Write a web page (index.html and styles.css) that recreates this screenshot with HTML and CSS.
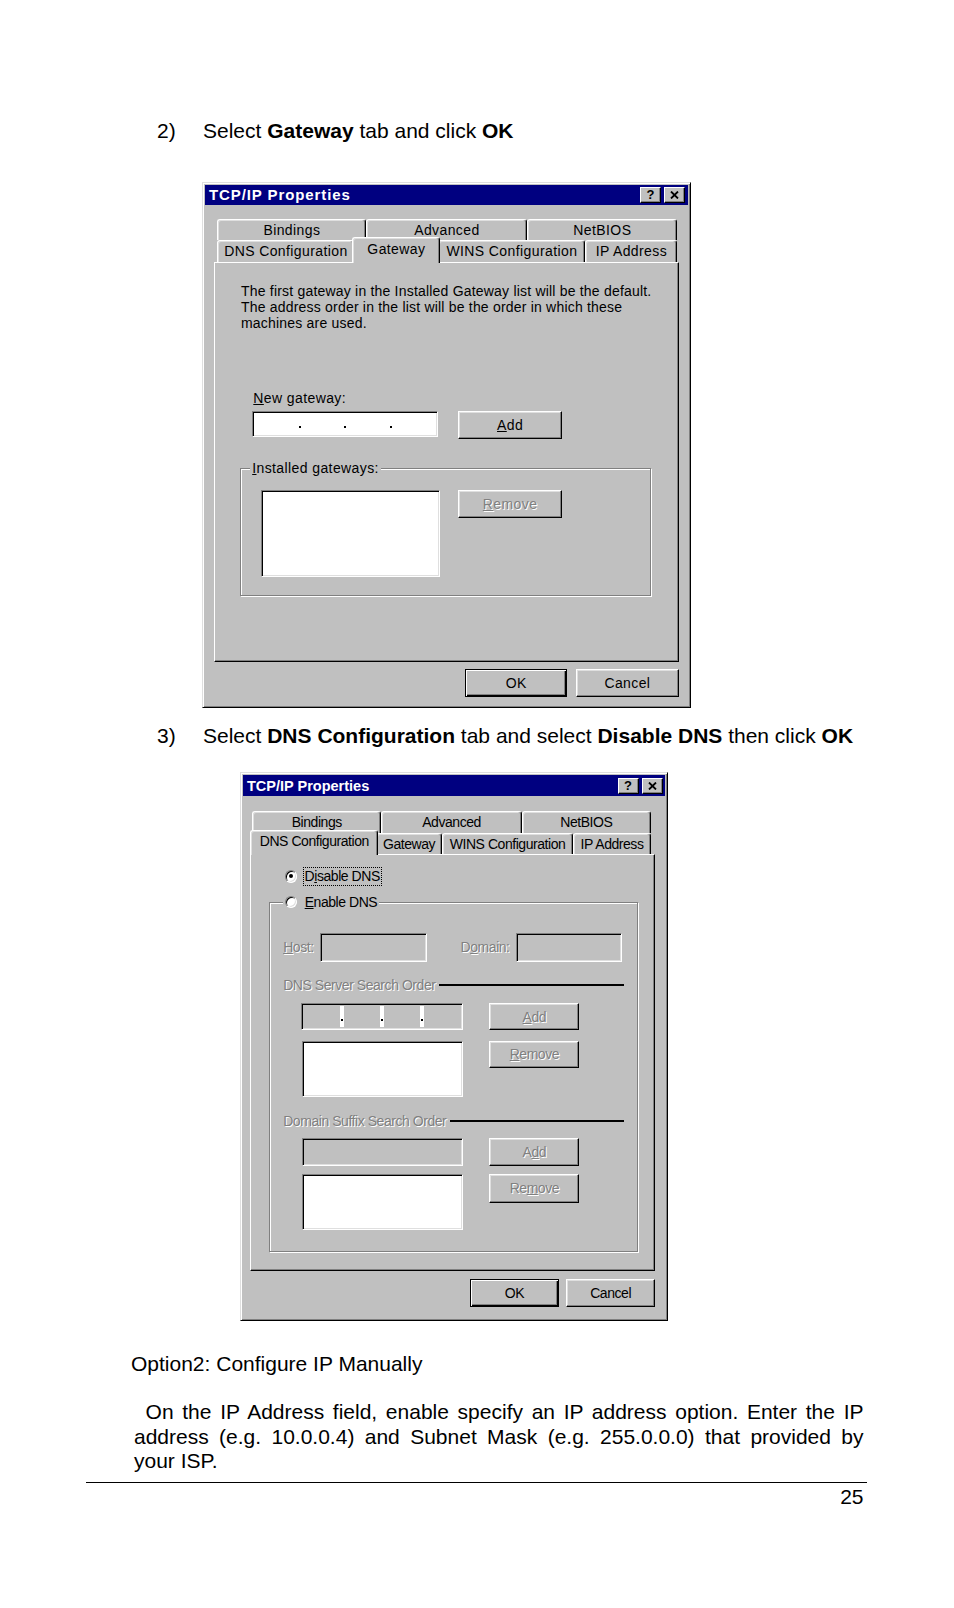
FILE: index.html
```html
<!DOCTYPE html>
<html>
<head>
<meta charset="utf-8">
<title>TCP/IP Properties</title>
<link rel="stylesheet" href="styles.css">
</head>
<body>
<div class="page">
  <p class="step"><span class="num">2)</span><span>Select <b>Gateway</b> tab and click <b>OK</b></span></p>

  <div class="dialog d1">
    <div class="titlebar">
      <span class="title">TCP/IP Properties</span>
      <span class="capbtns">
        <span class="capbtn">?</span>
        <span class="capbtn"><svg width="9" height="8" viewBox="0 0 9 8"><path d="M1 0.5 L8 7.5 M8 0.5 L1 7.5" stroke="#000" stroke-width="1.8" fill="none"/></svg></span>
      </span>
    </div>
    <div class="tabs">
      <div class="tabrow">
        <div class="tab w-a1">Bindings</div>
        <div class="tab w-a2">Advanced</div>
        <div class="tab w-a3">NetBIOS</div>
      </div>
      <div class="tabrow">
        <div class="tab w-b1">DNS Configuration</div>
        <div class="tab sel w-b2">Gateway</div>
        <div class="tab w-b3">WINS Configuration</div>
        <div class="tab w-b4">IP Address</div>
      </div>
    </div>
    <div class="panel">
      <p class="desc">The first gateway in the Installed Gateway list will be the default.<br>The address order in the list will be the order in which these<br>machines are used.</p>
      <div class="newgw"><u>N</u>ew gateway:</div>
      <div class="gwrow">
        <div class="sunken white ip1">
          <span class="seg"></span><span class="dot"></span><span class="seg"></span><span class="dot"></span><span class="seg"></span><span class="dot"></span><span class="seg"></span>
        </div>
        <div class="btn add1"><u>A</u>dd</div>
      </div>
      <div class="group g1">
        <div class="glabel"><u>I</u>nstalled gateways:</div>
        <div class="sunken white lb1"></div>
        <div class="btn rem1 dis"><u>R</u>emove</div>
      </div>
    </div>
    <div class="btnrow">
      <div class="btn def ok">OK</div>
      <div class="btn cancel">Cancel</div>
    </div>
  </div>

  <p class="step step-3"><span class="num">3)</span><span>Select <b>DNS Configuration</b> tab and select <b>Disable DNS</b> then click <b>OK</b></span></p>

  <div class="dialog d2">
    <div class="titlebar">
      <span class="title">TCP/IP Properties</span>
      <span class="capbtns">
        <span class="capbtn">?</span>
        <span class="capbtn"><svg width="9" height="8" viewBox="0 0 9 8"><path d="M1 0.5 L8 7.5 M8 0.5 L1 7.5" stroke="#000" stroke-width="1.8" fill="none"/></svg></span>
      </span>
    </div>
    <div class="tabs">
      <div class="tabrow">
        <div class="tab w-c1">Bindings</div>
        <div class="tab w-c2">Advanced</div>
        <div class="tab w-c3">NetBIOS</div>
      </div>
      <div class="tabrow">
        <div class="tab sel w-e1">DNS Configuration</div>
        <div class="tab w-e2">Gateway</div>
        <div class="tab w-e3">WINS Configuration</div>
        <div class="tab w-e4">IP Address</div>
      </div>
    </div>
    <div class="panel">
      <div class="dnsrow">
        <span class="radio on"></span>
        <span class="focus">D<u>i</u>sable DNS</span>
      </div>
      <div class="group g2">
        <div class="glabel"><span class="radio"></span><span class="rtext"><u>E</u>nable DNS</span></div>
        <div class="hostrow">
          <span class="dis hostl"><u>H</u>ost:</span>
          <span class="sunken grayf f-host"></span>
          <span class="dis doml">D<u>o</u>main:</span>
          <span class="sunken grayf f-dom"></span>
        </div>
        <div class="sect sect1"><span class="dis">DNS Server Search Order</span><span class="line"></span></div>
        <div class="frow r1">
          <div class="sunken grayf ip2">
            <span class="seg"></span><span class="sep"><span class="dot"></span></span><span class="seg"></span><span class="sep"><span class="dot"></span></span><span class="seg"></span><span class="sep"><span class="dot"></span></span><span class="seg"></span>
          </div>
          <div class="btn dis b2"><u>A</u>dd</div>
        </div>
        <div class="frow r2">
          <div class="sunken white lb2"></div>
          <div class="btn dis b2"><u>R</u>emove</div>
        </div>
        <div class="sect sect2"><span class="dis">Domain Suffix Search Order</span><span class="line"></span></div>
        <div class="frow r3">
          <div class="sunken grayf suf"></div>
          <div class="btn dis b2">A<u>d</u>d</div>
        </div>
        <div class="frow r4">
          <div class="sunken white lb2"></div>
          <div class="btn dis b2 b2t">Re<u>m</u>ove</div>
        </div>
      </div>
    </div>
    <div class="btnrow">
      <div class="btn def">OK</div>
      <div class="btn">Cancel</div>
    </div>
  </div>

  <p class="opt">Option2: Configure IP Manually</p>

  <p class="para">
    <span class="jl indent">On the IP Address field, enable specify an IP address option. Enter the IP</span>
    <span class="jl">address (e.g. 10.0.0.4) and Subnet Mask (e.g. 255.0.0.0) that provided by</span>
    <span class="last">your ISP.</span>
  </p>

  <div class="footrule"></div>
  <div class="pnum">25</div>
</div>
</body>
</html>
```

FILE: styles.css
```css
html, body {
  margin: 0;
  padding: 0;
  background: #fff;
}
body {
  font-family: "Liberation Sans", Arial, sans-serif;
  color: #000;
}
.page {
  width: 954px;
  padding-top: 119px;
  padding-bottom: 60px;
}

/* document text */
.step {
  display: flex;
  margin: 0 0 0 157px;
  font-size: 21px;
  line-height: 24px;
}
.step .num {
  width: 46px;
  flex: none;
}
.step-3 {
  margin-top: 16.5px;
}
.opt {
  margin: 31px 0 0 131px;
  font-size: 21px;
  line-height: 24px;
}
.para {
  margin: 24px 0 0 134px;
  width: 729.5px;
  font-size: 21px;
  line-height: 24.6px;
}
.jl {
  display: block;
  text-align: justify;
  text-align-last: justify;
}
.indent {
  text-indent: 11.6px;
}
.last {
  display: block;
}
.footrule {
  margin: 8.5px 0 0 86px;
  width: 780.5px;
  height: 1px;
  background: #000;
}
.pnum {
  margin-top: 2px;
  width: 863.5px;
  text-align: right;
  font-size: 21px;
  line-height: 24px;
}

/* window */
.dialog {
  box-sizing: border-box;
  background: #c0c0c0;
  border: 1px solid;
  border-color: #dfdfdf #000 #000 #dfdfdf;
  box-shadow: inset 1px 1px #fff, inset -1px -1px #808080;
  padding: 2px;
  font-size: 14px;
}
.d1 {
  width: 489px;
  height: 526px;
  margin: 38.5px 0 0 202px;
  letter-spacing: 0.4px;
}
.d2 {
  width: 427.6px;
  height: 549px;
  margin: 24px 0 0 240px;
  letter-spacing: -0.45px;
}

.titlebar {
  display: flex;
  align-items: center;
  justify-content: space-between;
  background: #000080;
  color: #fff;
  font-weight: bold;
  padding-left: 4px;
  padding-right: 3px;
}
.d1 .titlebar {
  height: 20px;
  font-size: 15px;
  letter-spacing: 0.9px;
}
.d2 .titlebar {
  height: 21px;
  font-size: 14.5px;
  letter-spacing: 0;
  padding-right: 2px;
}
.capbtns {
  display: flex;
  gap: 3px;
}
.capbtn {
  box-sizing: border-box;
  width: 21px;
  height: 16px;
  background: #c0c0c0;
  border: 1px solid;
  border-color: #fff #000 #000 #fff;
  box-shadow: inset -1px -1px #808080;
  color: #000;
  display: flex;
  align-items: center;
  justify-content: center;
  font-size: 13px;
  font-weight: bold;
  letter-spacing: 0;
}
.capbtn svg {
  display: block;
}

/* tabs */
.d1 .tabs {
  margin: 14px 0 0 12.4px;
}
.d2 .tabs {
  margin: 15px 0 0 9.3px;
}
.tabrow {
  display: flex;
  height: 21.5px;
  align-items: flex-end;
}
.tab {
  box-sizing: border-box;
  height: 21.5px;
  flex: none;
  display: flex;
  align-items: center;
  justify-content: center;
  background: #c0c0c0;
  border-top: 1px solid #fff;
  border-left: 1px solid #fff;
  border-right: 1px solid #000;
  border-radius: 3px 3px 0 0;
  box-shadow: inset -1px 0 #808080, inset 1px 1px #dfdfdf;
  white-space: nowrap;
}
.tab.sel {
  position: relative;
  z-index: 2;
  height: 25.5px;
  margin: 0 -2px -1px;
  padding-bottom: 3px;
}
.w-a1 { width: 149px; }
.w-a2 { width: 161px; }
.w-a3 { width: 150px; }
.w-b1 { width: 137px; }
.w-b2 { width: 88px; }
.w-b3 { width: 147px; }
.w-b4 { width: 92px; }
.w-c1 { width: 129px; }
.w-c2 { width: 140.5px; }
.w-c3 { width: 129px; }
.w-e1 { width: 128px; }
.w-e2 { width: 65.6px; }
.w-e3 { width: 131.3px; }
.w-e4 { width: 77.6px; }

.panel {
  box-sizing: border-box;
  border: 1px solid;
  border-color: #fff #000 #000 #fff;
  box-shadow: inset -1px -1px #808080;
  position: relative;
  z-index: 1;
}
.d1 .panel {
  width: 464.6px;
  height: 400px;
  margin-left: 9.3px;
}
.d2 .panel {
  width: 405px;
  height: 417.4px;
  margin-left: 7.3px;
}

/* controls */
.btn {
  box-sizing: border-box;
  display: flex;
  align-items: center;
  justify-content: center;
  background: #c0c0c0;
  border: 1px solid;
  border-color: #fff #000 #000 #fff;
  box-shadow: inset -1px -1px #808080, inset 1px 1px #dfdfdf;
  flex: none;
}
.btn.def {
  border-color: #000;
  box-shadow: inset 1px 1px #fff, inset -1px -1px #000, inset -2px -2px #808080;
}
.dis {
  color: #808080;
  text-shadow: 1px 1px 0 #fff;
}
.btnrow {
  display: flex;
  justify-content: flex-end;
}
.d1 .btnrow {
  width: 464.6px;
  margin: 7px 0 0 9.3px;
  gap: 9px;
}
.d1 .ok {
  width: 101.5px;
  height: 28px;
}
.d1 .cancel {
  width: 103px;
  height: 28px;
}
.d2 .btnrow {
  width: 405px;
  margin: 7.2px 0 0 7.3px;
  gap: 7px;
}
.d2 .btnrow .btn {
  width: 89.3px;
  height: 28.7px;
}

.sunken {
  box-sizing: border-box;
  border: 1px solid;
  border-color: #808080 #fff #fff #808080;
  box-shadow: inset 1px 1px #000, inset -1px -1px #dfdfdf;
  flex: none;
}
.white { background: #fff; }
.grayf { background: #c0c0c0; }

.group {
  box-sizing: border-box;
  position: relative;
  border: 1px solid #808080;
  box-shadow: inset 1px 1px #fff, 1px 1px #fff;
}
.glabel {
  position: absolute;
  top: -9px;
  height: 16px;
  line-height: 16px;
  background: #c0c0c0;
  padding: 0 2px;
  display: flex;
  align-items: center;
  white-space: nowrap;
}

/* panel 1 */
.desc {
  margin: 20.7px 0 0 25.7px;
  line-height: 16px;
  letter-spacing: 0.2px;
}
.newgw {
  margin: 58.8px 0 0 38px;
  line-height: 16px;
}
.gwrow {
  display: flex;
  align-items: flex-start;
  margin-top: 5.2px;
}
.ip1 {
  width: 185.6px;
  height: 25.6px;
  margin-left: 37px;
  display: flex;
  align-items: center;
  padding: 0 2px;
}
.seg {
  flex: 1;
}
.dot {
  width: 2px;
  height: 2px;
  background: #000;
  margin-top: 6px;
  flex: none;
}
.add1 {
  width: 103.6px;
  height: 27.7px;
  margin-left: 20.4px;
}
.g1 {
  width: 411px;
  height: 128px;
  margin: 29.6px 0 0 24.6px;
  padding: 20.5px;
  display: flex;
  align-items: flex-start;
}
.g1 .glabel {
  left: 9.3px;
}
.lb1 {
  width: 178.4px;
  height: 87px;
}
.rem1 {
  width: 103.6px;
  height: 27.7px;
  margin-left: 18.5px;
}

/* panel 2 */
.radio {
  box-sizing: border-box;
  width: 12.3px;
  height: 12.3px;
  flex: none;
  border-radius: 50%;
  background: #fff;
  border: 1px solid;
  border-color: #808080 #fff #fff #808080;
  box-shadow: inset 1px 1px #000, inset -1px -1px #dfdfdf;
  position: relative;
}
.radio.on::after {
  content: "";
  position: absolute;
  left: 3.1px;
  top: 3.1px;
  width: 4px;
  height: 4px;
  border-radius: 50%;
  background: #000;
}
.dnsrow {
  display: flex;
  align-items: center;
  height: 18.5px;
  margin-top: 12.3px;
}
.dnsrow .radio {
  margin-left: 33.9px;
}
.focus {
  margin-left: 5.1px;
  border: 1px dotted #000;
  padding: 0 1px;
  line-height: 16.5px;
}
.g2 {
  width: 369px;
  height: 349.7px;
  margin: 16.4px 0 0 17.5px;
}
.g2 .glabel {
  left: 13.4px;
}
.rtext {
  margin-left: 7.2px;
}
.hostrow {
  display: flex;
  align-items: center;
  height: 28.7px;
  margin: 29.8px 0 0 13.4px;
}
.hostl {
  width: 36.9px;
  flex: none;
}
.f-host,
.f-dom {
  width: 106.7px;
  height: 28.7px;
}
.doml {
  width: 55.2px;
  flex: none;
  margin-left: 33.8px;
}
.sect {
  display: flex;
  align-items: center;
  height: 16px;
  margin: 0 13.2px 0 13.4px;
  white-space: nowrap;
}
.sect1 { margin-top: 15.5px; }
.sect2 { margin-top: 15.6px; }
.sect .line {
  flex: 1;
  height: 2px;
  background: #000;
  margin-left: 4px;
}
.frow {
  display: flex;
  align-items: flex-start;
}
.r1 { margin-top: 9.5px; }
.r2 { margin-top: 10.2px; }
.r3 { margin-top: 9.5px; }
.r4 { margin-top: 8.2px; }
.ip2 {
  width: 162px;
  height: 27.7px;
  margin-left: 30.8px;
  display: flex;
  padding: 2px;
}
.sep {
  width: 4px;
  flex: none;
  background: #fff;
  display: flex;
  align-items: center;
  justify-content: center;
}
.sep .dot {
  margin-top: 6px;
}
.lb2,
.suf {
  width: 161px;
  margin-left: 31.8px;
}
.lb2 { height: 56.4px; }
.suf { height: 27.7px; }
.b2 {
  width: 90.2px;
  height: 27.7px;
  margin-left: 26.7px;
}
.b2t { height: 28.7px; }
```
